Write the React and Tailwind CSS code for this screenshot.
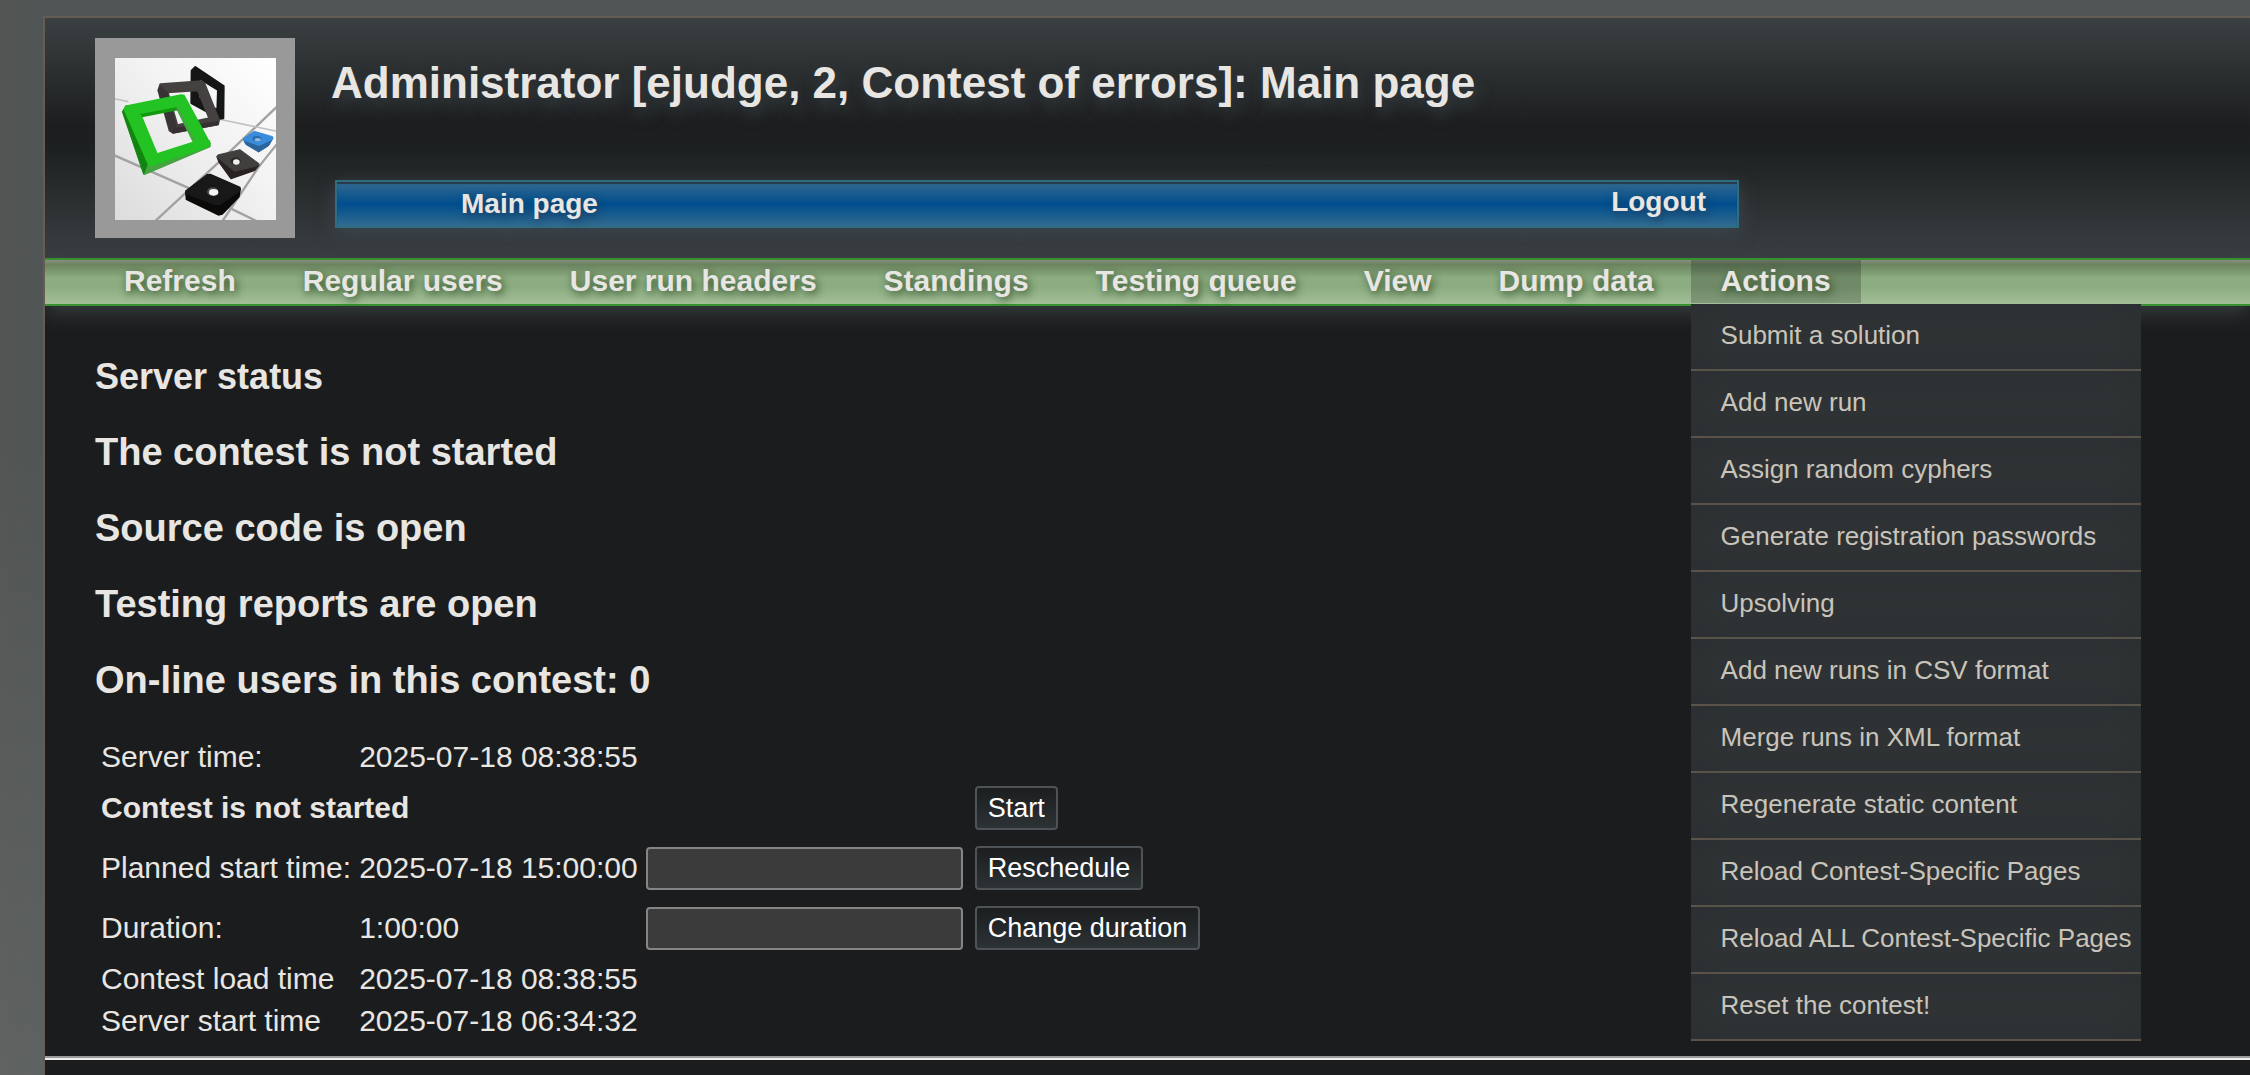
const navLinks = ['Refresh', 'Regular users', 'User run headers', 'Standings', 'Testing queue', 'View', 'Dump data'];

const actions = [
  'Submit a solution',
  'Add new run',
  'Assign random cyphers',
  'Generate registration passwords',
  'Upsolving',
  'Add new runs in CSV format',
  'Merge runs in XML format',
  'Regenerate static content',
  'Reload Contest-Specific Pages',
  'Reload ALL Contest-Specific Pages',
  'Reset the contest!',
];

const statusLines = [
  'The contest is not started',
  'Source code is open',
  'Testing reports are open',
  'On-line users in this contest: 0',
];

function Logo() {
  return (
    <svg viewBox="30 24 600 600" className="block size-[200px] shrink-0" role="img" aria-label="ejudge">
      <defs>
        <linearGradient id="paper" x1="1" y1="0" x2="0" y2="1">
          <stop offset="0" stopColor="#ffffff" />
          <stop offset="0.45" stopColor="#f2f2f2" />
          <stop offset="1" stopColor="#dcdcdc" />
        </linearGradient>
        <clipPath id="sheet">
          <rect x="90" y="84" width="483" height="486" />
        </clipPath>
      </defs>
      <rect x="30" y="24" width="600" height="600" fill="#999999" />
      <rect x="90" y="84" width="483" height="486" fill="url(#paper)" />
      <g clipPath="url(#sheet)">
        <g fill="none" stroke="#a2a2a2" strokeWidth="7">
          <path d="M88 376 L320 478 L520 576" />
          <path d="M576 230 L400 398 L212 572" />
          <path d="M576 342 L520 412 L412 574" />
          <path d="M88 206 L130 215 M400 267 L576 304" stroke="#c2c2c2" strokeWidth="5" />
        </g>
        <path fillRule="evenodd" fill="#161616" stroke="#161616" strokeWidth="6" strokeLinejoin="round"
          d="M331 111 L416 168 L415 265 L404 266 L319 219 L320 122 Z M343 145 L341 204 L397 240 L399 180 Z" />
        <path d="M341 184 L352 180 L366 213 L350 205 Z" fill="#333" />
        <path fillRule="evenodd" fill="#454141" stroke="#454141" strokeWidth="6" strokeLinejoin="round"
          d="M226 163 L350 154 L358 160 L402 270 L399 283 L264 308 L254 302 L220 181 Z M248 187 L277 286 L373 265 L339 181 Z" />
        <path d="M219 181 L226 166 L248 187 L275 288 L264 308 L254 303 Z" fill="#393335" />
        <path d="M262 311 L266 294 L402 272 L400 286 Z" fill="#363032" />
        <path fill="#11850f" stroke="#11850f" strokeWidth="3" strokeLinejoin="round" d="M124 226 L112 245 L176 433 L198 409 L206 372 Z" />
        <path fill="#46a342" stroke="#46a342" strokeWidth="3" strokeLinejoin="round" d="M178 434 L376 350 L374 332 L192 398 Z" />
        <path fillRule="evenodd" fill="#22c322" stroke="#22c322" strokeWidth="5" strokeLinejoin="round"
          d="M122 229 L288 195 L297 197 L375 341 L365 351 L197 407 L190 402 L119 240 Z M166 252 L216 372 L326 337 L274 232 Z" />
        <path d="M166 252 L274 232 L279 241 L171 262 Z" fill="#14980f" />
        <path d="M274 232 L281 231 L330 331 L326 337 Z" fill="#4aa447" />
        <path d="M475 328 L482 343 L521 366 L551 347 L563 326 L520 347 Z" fill="#2b649b" stroke="#2b649b" strokeWidth="3" strokeLinejoin="round" />
        <path d="M477 324 L508 304 L563 320 L564 327 L523 346 L475 330 Z" fill="#388cdb" stroke="#388cdb" strokeWidth="3" strokeLinejoin="round" />
        <ellipse cx="516" cy="326" rx="13" ry="8" fill="#2869a7" />
        <ellipse cx="518" cy="329" rx="9" ry="5" fill="#8fb8dc" />
        <path d="M396 380 L402 396 L438 446 L509 421 L522 405 L448 420 Z" fill="#292223" stroke="#292223" strokeWidth="4" strokeLinejoin="round" />
        <path d="M398 375 L465 359 L522 401 L520 407 L448 424 L396 381 Z" fill="#413e3e" stroke="#413e3e" strokeWidth="3" strokeLinejoin="round" />
        <ellipse cx="452" cy="393" rx="15" ry="11" fill="#2a2727" />
        <ellipse cx="454" cy="396" rx="10" ry="8" fill="#efefef" />
        <path d="M302 484 L304 508 L400 555 L412 552 L462 500 L466 476 L397 522 Z" fill="#0c0909" stroke="#0c0909" strokeWidth="4" strokeLinejoin="round" />
        <path d="M303 482 L366 434 L376 433 L465 472 L464 482 L404 523 L392 524 L303 490 Z" fill="#191819" stroke="#191819" strokeWidth="4" strokeLinejoin="round" />
        <ellipse cx="383" cy="485" rx="17" ry="13" fill="#4a4a4a" />
        <ellipse cx="386" cy="487" rx="14" ry="10" fill="#f4f4f4" />
      </g>
    </svg>
  );
}

function ActionButton({ children }) {
  return (
    <button
      type="button"
      className="ml-[4px] block h-[44px] rounded-[4px] border-2 border-[#4d5356] bg-linear-to-b from-[#1c1e1f] to-[#2c3235] px-[11px] text-[27px] leading-[36px] whitespace-nowrap text-white"
    >
      {children}
    </button>
  );
}

function TimeInput({ id }) {
  return (
    <input
      id={id}
      type="text"
      className="mt-px block h-[43px] w-[317px] rounded-[4px] border-2 border-[#858585] bg-[#3b3b3b] px-1 text-[27px] text-white"
    />
  );
}

export default function App() {
  return (
    <div className="flex min-h-screen flex-col bg-[linear-gradient(to_bottom,transparent_40%,#ffffff14),linear-gradient(to_right,#545454,#4f5655_43px,#505655)] pt-[16px] pl-[43px] font-['Liberation_Sans',Arial,sans-serif] text-[#e8e6e3]">
      <div className="flex grow flex-col overflow-x-clip border-t-2 border-l-2 border-[#665d52] bg-[#1b1c1d]">
        <header className="flex gap-[36px] bg-[linear-gradient(to_bottom,#3b4042,#1c1e1f_45%,#1d2020_54%,#3b3f42)] px-[50px] py-[20px]">
          <Logo />
          <div className="flex min-w-0 grow flex-col justify-between pb-[10px]">
            <h1 className="pt-[20px] text-[44px] leading-[50px] font-bold whitespace-nowrap [text-shadow:4px_8px_14px_#343c40]">
              Administrator [ejudge, 2, Contest of errors]: Main page
            </h1>
            <div className="ml-[4px] flex w-full max-w-[1404px] justify-between border-2 border-[#2f6d82] bg-[linear-gradient(to_bottom,#336a8f,#004e8e_50%,#326b8f)] pr-[31px] pl-[124px] text-[28px] font-bold shadow-[0_6px_18px_#3b464f,inset_0_2px_1px_#263a48]">
              <span className="leading-[44px] [text-shadow:2px_3px_8px_#1a3a5a]">Main page</span>
              <a href="#logout" className="leading-[40px] [text-shadow:2px_3px_8px_#1a3a5a]">Logout</a>
            </div>
          </div>
        </header>

        <nav className="relative z-10 h-[48px] border-y-2 border-[#36912f] bg-[linear-gradient(to_bottom,#8a8f83,#6b845f_10%,#8dae82_42%,#8bac80_60%,#a3bf99)] shadow-[0_8px_20px_#353b3d]">
          <ul className="flex gap-[7px] pl-[49px] text-[30px] leading-[41px] font-bold whitespace-nowrap [text-shadow:2px_3px_8px_#2b4a22]">
            {navLinks.map((label) => (
              <li key={label}>
                <a href="#nav" className="block px-[30px]">{label}</a>
              </li>
            ))}
            <li className="relative">
              <a href="#actions" className="block h-[43px] bg-black/20 px-[30px]">Actions</a>
              <ul className="absolute top-[44px] left-0 w-[450px] text-[26px] font-normal text-[#c9c4bb] [text-shadow:none]">
                {actions.map((label) => (
                  <li key={label} className="border-b-2 border-[#59534a] bg-[#2f3335] shadow-[inset_0_0_30px_#2b2f31]">
                    <a href="#action" className="block pb-[3px] pl-[30px] leading-[62px]">{label}</a>
                  </li>
                ))}
              </ul>
            </li>
          </ul>
        </nav>

        <main className="pt-[50px]">
          <div className="px-[50px]">
            <h2 className="text-[36px] leading-[42px] font-bold">Server status</h2>
            {statusLines.map((line) => (
              <h2 key={line} className="mt-[32px] text-[38px] leading-[44px] font-bold">{line}</h2>
            ))}
            <table className="mt-[32px] border-separate border-spacing-1 text-[30px] leading-[34px] whitespace-nowrap [&_td]:px-[2px] [&_td]:py-0">
              <tbody>
                <tr className="h-[38px]">
                  <td>Server time:</td>
                  <td>2025-07-18 08:38:55</td>
                </tr>
                <tr className="h-[56px]">
                  <td colSpan={2} className="font-bold">Contest is not started</td>
                  <td></td>
                  <td><ActionButton>Start</ActionButton></td>
                </tr>
                <tr className="h-[56px]">
                  <td><label htmlFor="start-time">Planned start time:</label></td>
                  <td>2025-07-18 15:00:00</td>
                  <td><TimeInput id="start-time" /></td>
                  <td><ActionButton>Reschedule</ActionButton></td>
                </tr>
                <tr className="h-[56px]">
                  <td><label htmlFor="duration">Duration:</label></td>
                  <td>1:00:00</td>
                  <td><TimeInput id="duration" /></td>
                  <td><ActionButton>Change duration</ActionButton></td>
                </tr>
                <tr className="h-[38px]">
                  <td>Contest load time</td>
                  <td>2025-07-18 08:38:55</td>
                </tr>
                <tr className="h-[38px]">
                  <td>Server start time</td>
                  <td>2025-07-18 06:34:32</td>
                </tr>
              </tbody>
            </table>
          </div>
          <hr className="mt-[12px] h-[4px] border-t-2 border-b-2 border-t-[#9a9a9a] border-b-[#eeeeee]" />
        </main>
      </div>
    </div>
  );
}
